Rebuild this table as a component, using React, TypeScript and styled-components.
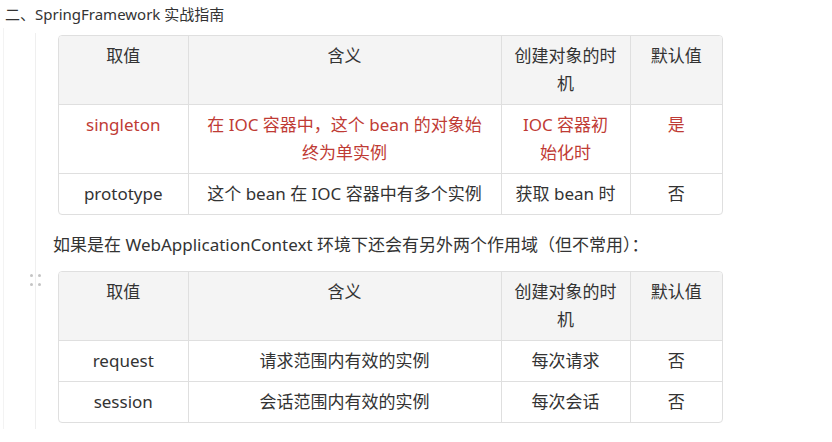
import React from 'react';
import styled, { createGlobalStyle } from 'styled-components';

const GlobalStyle = createGlobalStyle`
  body {
    margin: 0;
    background: #fff;
    font-family: "Noto Sans", "Noto Sans CJK SC", sans-serif;
    color: #333;
  }
`;

// 스타일 정의부
const Page = styled.div`
  width: 832px;
  height: 442px;
  overflow: hidden;
  background: #fff;
`;

const Heading = styled.div`
  height: 28px;
  padding-left: 5px;
  font-size: 15px;
  line-height: 28px;
  color: #333;
`;

const OuterRail = styled.div`
  margin-left: 3px;
  padding-top: 5px;
  border-left: 1px solid #f3f3f3;
`;

const InnerRail = styled.div`
  margin-left: 31px;
  padding-top: 2px;
  padding-bottom: 6px;
  border-left: 1px solid #efefef;
`;

const Paragraph = styled.p`
  margin: 16px 0 12px 17px;
  font-size: 17px;
  line-height: 28px;
  color: #333;
`;

const TableBlock = styled.div`
  position: relative;
  margin-left: 22px;
  width: 665px;
`;

const DragHandle = styled.div`
  position: absolute;
  left: -28px;
  top: 3px;
  display: grid;
  grid-template-columns: 3px 3px;
  gap: 6px 5px;

  > span {
    width: 3px;
    height: 3px;
    border-radius: 50%;
    background: #c4c4c4;
  }
`;

const TableFrame = styled.div`
  border: 1px solid #dfdfdf;
  border-radius: 4px;
  overflow: hidden;
`;

const Table = styled.table`
  width: 663px;
  table-layout: fixed;
  border-collapse: collapse;
  font-size: 17px;
  line-height: 28px;
`;

const Col = styled.col<{ $w: number }>`
  width: ${(p) => p.$w}px;
`;

const Th = styled.th`
  padding: 6px 12px;
  vertical-align: top;
  font-weight: normal;
  text-align: center;
  color: #333;
  background: #f4f4f4;
  border-right: 1px solid #dfdfdf;
  border-bottom: 1px solid #dfdfdf;

  &:last-child {
    border-right: none;
  }
`;

const Td = styled.td<{ $red?: boolean }>`
  padding: 6px 12px;
  vertical-align: top;
  text-align: center;
  white-space: pre-line;
  color: ${(p) => (p.$red ? '#bf3b35' : '#333')};
  border-right: 1px solid #dfdfdf;
  border-bottom: 1px solid #dfdfdf;

  &:last-child {
    border-right: none;
  }

  tr:last-child > & {
    border-bottom: none;
  }
`;

// 컴포넌트 구현부
const headers: [string, number][] = [
  ['取值', 129],
  ['含义', 313],
  ['创建对象的时机', 129],
  ['默认值', 92],
];

type Row = { cells: string[]; red?: boolean };

const scopeRows: Row[] = [
  { cells: ['singleton', '在 IOC 容器中，这个 bean 的对象始终为单实例', 'IOC 容器初\n始化时', '是'], red: true },
  { cells: ['prototype', '这个 bean 在 IOC 容器中有多个实例', '获取 bean 时', '否'] },
];

const webRows: Row[] = [
  { cells: ['request', '请求范围内有效的实例', '每次请求', '否'] },
  { cells: ['session', '会话范围内有效的实例', '每次会话', '否'] },
];

function ScopeTable({ rows, handle }: { rows: Row[]; handle?: boolean }) {
  return (
    <TableBlock>
      {handle && (
        <DragHandle>
          <span />
          <span />
          <span />
          <span />
        </DragHandle>
      )}
      <TableFrame>
        <Table>
          <colgroup>
            {headers.map(([label, w]) => (
              <Col key={label} $w={w} />
            ))}
          </colgroup>
          <thead>
            <tr>
              {headers.map(([label]) => (
                <Th key={label}>{label}</Th>
              ))}
            </tr>
          </thead>
          <tbody>
            {rows.map((row) => (
              <tr key={row.cells[0]}>
                {row.cells.map((c, i) => (
                  <Td key={i} $red={row.red}>
                    {c}
                  </Td>
                ))}
              </tr>
            ))}
          </tbody>
        </Table>
      </TableFrame>
    </TableBlock>
  );
}

export default function App() {
  return (
    <Page>
      <GlobalStyle />
      <Heading>二、SpringFramework 实战指南</Heading>
      <OuterRail>
        <InnerRail>
          <ScopeTable rows={scopeRows} />
          <Paragraph>如果是在 WebApplicationContext 环境下还会有另外两个作用域（但不常用）：</Paragraph>
          <ScopeTable rows={webRows} handle />
        </InnerRail>
      </OuterRail>
    </Page>
  );
}
